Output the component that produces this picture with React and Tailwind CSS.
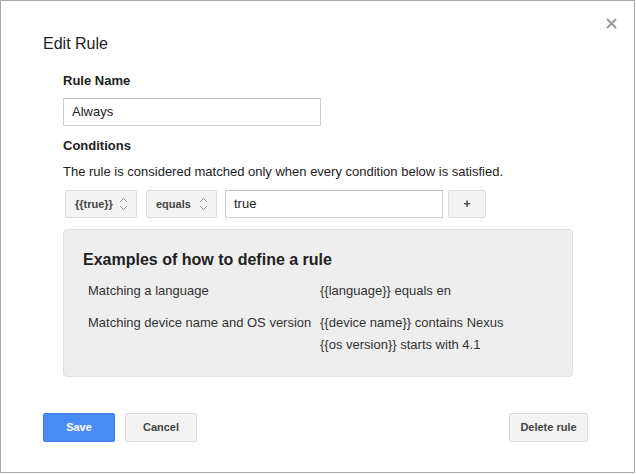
function UpDown() {
  return (
    <svg width="9" height="14" viewBox="0 0 9 14" fill="none" stroke="#9a9a9a" strokeWidth="1">
      <path d="M1 5 L4.5 1.5 L8 5" />
      <path d="M1 9 L4.5 12.5 L8 9" />
    </svg>
  )
}

function SelectBox({ label, width }) {
  return (
    <div className={`flex items-center justify-between h-[28px] ${width} pl-[9px] pr-[8px] bg-[#f3f3f3] border border-[#dcdcdc] rounded-[2px] text-[11px] font-bold text-[#444]`}>
      <span>{label}</span>
      <UpDown />
    </div>
  )
}

export default function App() {
  return (
    <div className="w-[636px] h-[474px] bg-white" style={{ fontFamily: '"Liberation Sans", Arial, sans-serif' }}>
      <div className="relative flex flex-col w-[635px] h-[473px] border border-[#a9a9a9] pl-[42px] pr-[46px] pt-[33px] text-[#222]">
        {/* Close */}
        <button className="absolute right-[17px] top-[16px] w-[12px] h-[12px] flex items-center justify-center">
          <svg width="11" height="11" viewBox="0 0 11 11" stroke="#999" strokeWidth="2">
            <path d="M1 1 L10 10 M10 1 L1 10" />
          </svg>
        </button>

        <h1 className="text-[16px] leading-[20px]">Edit Rule</h1>

        <div className="pl-[20px] flex flex-col">
          <div className="mt-[19px] text-[13px] leading-[16px] font-bold">Rule Name</div>
          <div className="mt-[9px] w-[258px] h-[28px] border border-[#d0d0d0] border-t-[#c0c0c0] flex items-center pl-[8px] text-[13px]">
            Always
          </div>

          <div className="mt-[12px] text-[13px] leading-[16px] font-bold">Conditions</div>
          <div className="mt-[10px] text-[13px] leading-[16px]">
            The rule is considered matched only when every condition below is satisfied.
          </div>

          <div className="mt-[10px] flex items-center pl-[2px]">
            <SelectBox label="{{true}}" width="w-[72px]" />
            <div className="w-[9px]" />
            <SelectBox label="equals" width="w-[71px]" />
            <div className="w-[8px]" />
            <div className="w-[218px] h-[28px] border border-[#d0d0d0] border-t-[#c0c0c0] flex items-center pl-[8px] text-[13px]">
              true
            </div>
            <div className="w-[5px]" />
            <div className="w-[38px] h-[28px] bg-[#f3f3f3] border border-[#dcdcdc] rounded-[2px] flex items-center justify-center text-[12px] font-bold text-[#444]">
              +
            </div>
          </div>

          <div className="mt-[11px] w-[510px] h-[148px] bg-[#eeeeee] border border-[#e0e0e0] rounded-[4px] pl-[19px] pt-[20px]">
            <h2 className="text-[16px] leading-[20px] font-bold">Examples of how to define a rule</h2>
            <div className="mt-[10px] pl-[5px] grid grid-cols-[232px_1fr] text-[13px] leading-[22px] text-[#333]">
              <div>Matching a language</div>
              <div>{'{{language}} equals en'}</div>
              <div className="mt-[10px]">Matching device name and OS version</div>
              <div className="mt-[10px]">{'{{device name}} contains Nexus'}</div>
              <div></div>
              <div>{'{{os version}} starts with 4.1'}</div>
            </div>
          </div>
        </div>

        <div className="mt-[36px] flex items-center">
          <button className="w-[72px] h-[29px] bg-[#4a8af4] border border-[#3c7ce6] rounded-[2px] text-white text-[11px] font-bold">
            Save
          </button>
          <button className="ml-[10px] w-[72px] h-[29px] bg-[#f3f3f3] border border-[#dcdcdc] rounded-[2px] text-[#444] text-[11px] font-bold">
            Cancel
          </button>
          <button className="ml-auto w-[79px] h-[29px] bg-[#f3f3f3] border border-[#dcdcdc] rounded-[2px] text-[#444] text-[11px] font-bold">
            Delete rule
          </button>
        </div>
      </div>
    </div>
  )
}
